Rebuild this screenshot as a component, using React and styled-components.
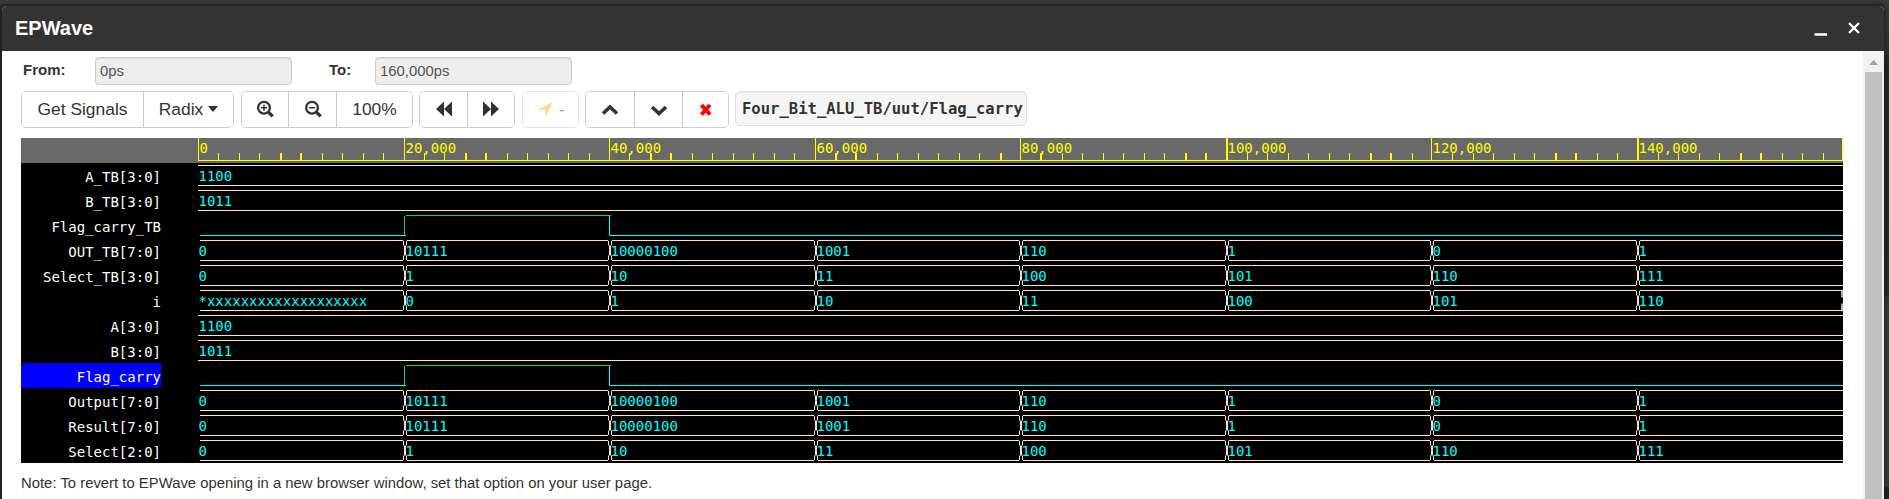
import React from 'react';
import styled, { createGlobalStyle } from 'styled-components';

const Global = createGlobalStyle`
  * { box-sizing: border-box; }
  body { margin: 0; background: #2e2e2e; overflow: hidden; font-family: "Liberation Sans", Arial, sans-serif; color: #333; }
`;

const Backdrop = styled.div`
  height: 499px;
  padding: 6px 5px 0 2px;
  background:
    linear-gradient(#3a3a3a 0, #333 50px, #282828 60px, #2a2a2a 296px, #3a3a3a 297px, #3a3a3a 486px, #242424 488px) right / 5px 100% no-repeat,
    linear-gradient(#3c3c3c 0, #3a3a3a 3px, #2a2a2a 6px, #2c2c2c 60px);
`;

const Dialog = styled.section`
  height: 493px;
  display: flex;
  flex-direction: column;
  background: #fff;
  border-radius: 5px 5px 0 0;
  overflow: hidden;
  box-shadow: 0 0 6px rgba(0, 0, 0, 0.6);
`;

const TitleBar = styled.header`
  height: 45px;
  flex: none;
  display: flex;
  align-items: center;
  justify-content: space-between;
  padding: 0 22px 0 13px;
  background: #333;
  color: #fff;
`;

const Title = styled.h1`
  margin: 0;
  padding-bottom: 1px;
  font-size: 20px;
  line-height: 24px;
`;

const WindowControls = styled.div`
  display: flex;
  gap: 19px;
`;

const Body = styled.div`
  flex: 1;
  display: flex;
  min-height: 0;
`;

const Content = styled.main`
  flex: 1;
  padding: 6px 0 0 19px;
`;

const ScrollBar = styled.div`
  width: 21px;
  display: flex;
  flex-direction: column;
  align-items: center;
  background: #f1f1f1;
`;

const ScrollArrow = styled.div`
  height: 21px;
  padding-top: 9px;
  line-height: 0;
`;

const Thumb = styled.div`
  flex: 1;
  width: 17px;
  background: #c1c1c1;
`;

const RangeRow = styled.div`
  display: flex;
  height: 34px;
`;

const RangeLabel = styled.label`
  width: ${(p) => p.$width}px;
  padding: 4px 0 0 ${(p) => p.$indent}px;
  font-size: 15px;
  line-height: 17px;
  font-weight: bold;
`;

const RangeField = styled.input`
  width: 197px;
  height: 28px;
  margin: 0;
  padding: 0 4px 1px;
  border: 1px solid #ccc;
  border-radius: 4px;
  background: #eee;
  box-shadow: inset 0 1px 1px rgba(0, 0, 0, 0.075);
  color: #555;
  font: 14.85px "Liberation Sans", Arial, sans-serif;
`;

const Toolbar = styled.div`
  display: flex;
  height: 47px;
  align-items: flex-start;
`;

const ButtonGroup = styled.div`
  display: flex;
  height: 37px;
  margin-right: ${(p) => p.$gap}px;
  border: 1px solid #ccc;
  border-radius: 5px;
  overflow: hidden;
  opacity: ${(p) => (p.$disabled ? 0.5 : 1)};
`;

const Button = styled.button`
  width: ${(p) => p.$width}px;
  display: flex;
  align-items: center;
  justify-content: center;
  padding: 0 0 1px;
  border: 0;
  background: #fff;
  color: #333;
  font: 17.4px "Liberation Sans", Arial, sans-serif;
  & + & { border-left: 1px solid #ccc; }
`;

const Caret = styled.span`
  margin-left: 5px;
  border: 5px solid transparent;
  border-top: 6px solid #333;
  border-bottom: 0;
`;

const SignalPath = styled.div`
  width: 292px;
  height: 35px;
  padding-left: 6px;
  border: 1px solid #e0e0e0;
  border-radius: 5px;
  background: #f5f5f5;
  box-shadow: inset 0 1px 1px rgba(0, 0, 0, 0.06);
  font: bold 15.55px/34px "DejaVu Sans Mono", monospace;
  white-space: nowrap;
`;

const Viewer = styled.div`
  width: 1822px;
  display: flex;
  background: #000;
`;

const Names = styled.div`
  width: 140px;
  flex: none;
`;

const RulerPad = styled.div`
  width: 177px;
  height: 25px;
  background: #696969;
`;

const SignalName = styled.div`
  height: 25px;
  background: ${(p) => (p.$selected ? '#00f' : '#000')};
  color: #fff;
  font: 14px/28px "DejaVu Sans Mono", monospace;
  text-align: right;
  white-space: pre;
`;

const Plot = styled.svg`
  display: block;
  width: 1682px;
  height: 325px;
  font: 14px "DejaVu Sans Mono", monospace;
`;

const Note = styled.p`
  margin: 10px 0 0;
  font-size: 14.86px;
  line-height: 20px;
`;

const OUT = ['0', '10111', '10000100', '1001', '110', '1', '0', '1'];
const SELECT = ['0', '1', '10', '11', '100', '101', '110', '111'];
const SIGNALS = [
  { name: 'A_TB[3:0]', constant: '1100' },
  { name: 'B_TB[3:0]', constant: '1011' },
  { name: 'Flag_carry_TB', flag: true },
  { name: 'OUT_TB[7:0]', values: OUT },
  { name: 'Select_TB[3:0]', values: SELECT },
  { name: 'i', values: ['*' + 'x'.repeat(19), '0', '1', '10', '11', '100', '101', '110'], closed: true },
  { name: 'A[3:0]', constant: '1100' },
  { name: 'B[3:0]', constant: '1011' },
  { name: 'Flag_carry', flag: true, selected: true },
  { name: 'Output[7:0]', values: OUT },
  { name: 'Result[7:0]', values: OUT },
  { name: 'Select[2:0]', values: SELECT },
];

const ORIGIN = 37;
const END = 1682;
const MARKS = [37, 243, 448, 654, 859, 1065, 1270, 1476];
const TIMES = ['0', '20,000', '40,000', '60,000', '80,000', '100,000', '120,000', '140,000'];

function Ruler() {
  const ticks = [];
  for (let n = 1; n < 80; n += 1) {
    if (n % 10 === 0) continue;
    const x = ORIGIN + 1.25 * Math.round(16.45 * n);
    const wide = x % 1 === 0.5;
    ticks.push(<rect key={n} x={wide ? Math.floor(x) : Math.round(x)} y="15" width={wide ? 2 : 1} height="7" />);
  }
  return (
    <g fill="#ff0">
      <rect width={END} height="25" fill="#696969" />
      {ticks}
      <rect x={ORIGIN} y="22" width={END - ORIGIN} height="1" />
      <rect x={END - 1} width="1" height="23" />
      {MARKS.map((x, i) => (
        <g key={x}>
          <rect x={x} width={i === 5 || i === 7 ? 2 : 1} height="23" />
          <text x={x + 1.5} y="14.5">{TIMES[i]}</text>
        </g>
      ))}
    </g>
  );
}

function Bus({ values, closed }) {
  return values.map((value, i) => {
    const x = MARKS[i];
    const left = i ? x + 3 : x + 2;
    const right = i < 7 ? MARKS[i + 1] - 1 : END;
    return (
      <g key={i}>
        <path d={`M${left} 2.5H${right}M${left} 22.5H${right}`} stroke="#ffe4c4" />
        {i > 0 && (
          <path
            d={`M${x - 1} 2.500l.5 .5v4l1 1v4l1 .5l-1 .5v4l-1 1v4M${x + 3} 2.500l-.5 .5v4l-1 1v4l-1 .5l1 .5v4l1 1v4`}
            stroke="#ffe4c4"
            fill="none"
          />
        )}
        {closed && i === 7 && <path d="M1680 2.5h1v7M1680 22.5h1v-7" stroke="#ffe4c4" fill="none" strokeWidth="1.5" />}
        <text x={x + (i ? 1.5 : 0.5)} y="17.5" fill="#0ff">{value}</text>
      </g>
    );
  });
}

function Trace({ signal }) {
  if (signal.constant) {
    return (
      <g>
        <path d={`M${ORIGIN} 2.5H${END}M${ORIGIN} 22.5H${END}`} stroke="#ffe4c4" />
        <text x={ORIGIN + 0.5} y="17.5" fill="#0ff">{signal.constant}</text>
      </g>
    );
  }
  if (signal.flag) {
    return (
      <g>
        <path d="M39 22.5H245M448.5 3V22.5H1682" stroke="#0ff" fill="none" />
        <path d="M243.5 22V3M245 2.5H450" stroke="#32cd32" />
      </g>
    );
  }
  return <Bus values={signal.values} closed={signal.closed} />;
}

const Icon = ({ children, size = 18, color = '#333', ...rest }) => (
  <svg width={size} height={size} viewBox="0 0 18 18" fill={color} {...rest}>{children}</svg>
);

const Magnifier = ({ plus }) => (
  <Icon fill="none" stroke="#333">
    <circle cx="8" cy="7.7" r="5.9" strokeWidth="2.3" />
    <path d="M12.2 12l4.5 4.3" strokeWidth="3.2" />
    <path d={plus ? 'M5 7.7h6M8 4.7v6' : 'M5 7.7h6'} strokeWidth="1.6" />
  </Icon>
);

export default function App() {
  return (
    <Backdrop>
      <Global />
      <Dialog>
        <TitleBar>
          <Title>EPWave</Title>
          <WindowControls>
            <svg width="15" height="15" viewBox="0 0 15 15"><path d="M1.500 13.5h12.500" stroke="#fff" strokeWidth="2.4" /></svg>
            <svg width="15" height="15" viewBox="0 0 15 15"><path d="M2 2l10 10m0-10l-10 10" stroke="#fff" strokeWidth="2.3" /></svg>
          </WindowControls>
        </TitleBar>
        <Body>
          <Content>
            <RangeRow>
              <RangeLabel $width={74} $indent={2}>From:</RangeLabel>
              <RangeField readOnly value="0ps" />
              <RangeLabel $width={83} $indent={37}>To:</RangeLabel>
              <RangeField readOnly value="160,000ps" />
            </RangeRow>
            <Toolbar>
              <ButtonGroup $gap={7}>
                <Button $width={121}>Get Signals</Button>
                <Button $width={90}>Radix<Caret /></Button>
              </ButtonGroup>
              <ButtonGroup $gap={6}>
                <Button $width={46}><Magnifier plus /></Button>
                <Button $width={48}><Magnifier /></Button>
                <Button $width={76}>100%</Button>
              </ButtonGroup>
              <ButtonGroup $gap={7}>
                <Button $width={47}><Icon><path d="M9 1.500v15L1 9zM17 1.500v15L9 9z" /></Icon></Button>
                <Button $width={47}><Icon><path d="M1 1.500v15l8-7.500zM9 1.500v15l8-7.500z" /></Icon></Button>
              </ButtonGroup>
              <ButtonGroup $gap={6} $disabled>
                <Button $width={55}>
                  <Icon color="#ffb030"><path d="M16.5 2L9.500 17V9.800H1.500z" /></Icon>&nbsp;-
                </Button>
              </ButtonGroup>
              <ButtonGroup $gap={6}>
                <Button $width={48}><Icon fill="none" stroke="#333" strokeWidth="3.6"><path d="M2 13.500l7-6.500 7 6.500" /></Icon></Button>
                <Button $width={48}><Icon fill="none" stroke="#333" strokeWidth="3.6"><path d="M2 7l7 6.500 7-6.500" /></Icon></Button>
                <Button $width={46}><Icon fill="none" stroke="#f00" strokeWidth="4"><path d="M4.500 5l8.500 9.500m0-9.500L4.500 14.500" /></Icon></Button>
              </ButtonGroup>
              <SignalPath>Four_Bit_ALU_TB/uut/Flag_carry</SignalPath>
            </Toolbar>
            <Viewer>
              <Names>
                <RulerPad />
                {SIGNALS.map((s) => (
                  <SignalName key={s.name} $selected={s.selected}>{s.name}</SignalName>
                ))}
              </Names>
              <Plot>
                <Ruler />
                {SIGNALS.map((s, i) => (
                  <g key={s.name} transform={`translate(0 ${25 + i * 25})`}><Trace signal={s} /></g>
                ))}
              </Plot>
            </Viewer>
            <Note>Note: To revert to EPWave opening in a new browser window, set that option on your user page.</Note>
          </Content>
          <ScrollBar>
            <ScrollArrow>
              <svg width="9" height="5" viewBox="0 0 9 5"><path d="M4.500 0L9 5H0z" fill="#a3a3a3" /></svg>
            </ScrollArrow>
            <Thumb />
          </ScrollBar>
        </Body>
      </Dialog>
    </Backdrop>
  );
}
